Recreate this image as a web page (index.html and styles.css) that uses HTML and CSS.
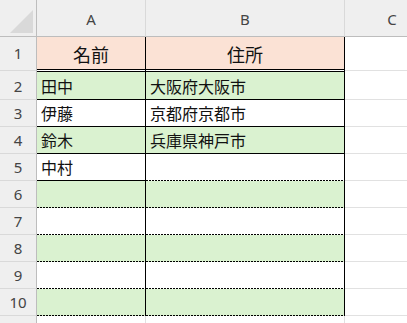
FILE: index.html
```html
<!DOCTYPE html>
<html lang="ja">
<head>
<meta charset="utf-8">
<link rel="stylesheet" href="styles.css">
</head>
<body>
<div class="sheet">
  <div class="corner"><svg width="36" height="36" viewBox="0 0 36 36"><polygon points="10,33 33,10 33,33" fill="#d9d9d9"/></svg></div>
  <div class="colh">A</div>
  <div class="colh">B</div>
  <div class="colh">C</div>

  <div class="rowh r1">1</div>
  <div class="cell hd ca">名前</div>
  <div class="cell hd cb">住所</div>
  <div class="cc r1c"></div>

  <div class="rowh">2</div>
  <div class="cell g ca solid">田中</div>
  <div class="cell g cb solid">大阪府大阪市</div>
  <div class="cc"></div>

  <div class="rowh">3</div>
  <div class="cell ca solid">伊藤</div>
  <div class="cell cb solid">京都府京都市</div>
  <div class="cc"></div>

  <div class="rowh">4</div>
  <div class="cell g ca solid">鈴木</div>
  <div class="cell g cb solid">兵庫県神戸市</div>
  <div class="cc"></div>

  <div class="rowh">5</div>
  <div class="cell ca solid">中村</div>
  <div class="cell cb dot"></div>
  <div class="cc"></div>

  <div class="rowh">6</div>
  <div class="cell g ca dot"></div>
  <div class="cell g cb dot"></div>
  <div class="cc"></div>

  <div class="rowh">7</div>
  <div class="cell ca dot"></div>
  <div class="cell cb dot"></div>
  <div class="cc"></div>

  <div class="rowh">8</div>
  <div class="cell g ca dot"></div>
  <div class="cell g cb dot"></div>
  <div class="cc"></div>

  <div class="rowh">9</div>
  <div class="cell ca dot"></div>
  <div class="cell cb dot"></div>
  <div class="cc"></div>

  <div class="rowh">10</div>
  <div class="cell g ca dot"></div>
  <div class="cell g cb dot"></div>
  <div class="cc"></div>

  <div class="rowh">11</div>
  <div class="empty"></div>
  <div class="empty"></div>
  <div class="cc"></div>
</div>
</body>
</html>
```

FILE: styles.css
```css
html, body {
  margin: 0;
  padding: 0;
  background: #fff;
  overflow: hidden;
}

body {
  width: 407px;
  height: 323px;
}

.sheet {
  display: grid;
  grid-template-columns: 37px 109px 199px 95px;
  grid-template-rows: 37px 35px 28px repeat(8, 27px) 27px;
  width: 440px;
  font-family: "Noto Sans CJK JP", "Noto Sans", sans-serif;
  color: #111;
}

.sheet > div {
  box-sizing: border-box;
}

.corner {
  background: #efefef;
  border-right: 1px solid #bdbdbd;
  border-bottom: 1px solid #bdbdbd;
}

.corner svg {
  display: block;
}

.colh {
  background: #efefef;
  border-right: 1px solid #d9d9d9;
  border-bottom: 1px solid #bdbdbd;
  display: flex;
  align-items: center;
  justify-content: center;
  font-family: "Noto Sans", "Open Sans", sans-serif;
  font-size: 15px;
  color: #444;
  padding-top: 1px;
}

.rowh {
  background: #efefef;
  border-right: 1px solid #bdbdbd;
  border-bottom: 1px solid #d9d9d9;
  display: flex;
  align-items: center;
  justify-content: center;
  font-family: "Noto Sans", "Open Sans", sans-serif;
  font-size: 15px;
  color: #444;
}

.rowh.r1 {
  border-bottom: none;
  background: linear-gradient(to bottom, #efefef 33px, #d9d9d9 33px 34px, #efefef 34px);
  padding-bottom: 3px;
}

.cell {
  display: flex;
  align-items: center;
  padding-left: 4px;
  font-size: 16px;
  line-height: 1;
  border-right: 1px solid #000;
}

.hd {
  background: #fbe2d5;
  background-clip: padding-box;
  border-bottom: 3px double #000;
  justify-content: center;
  padding-left: 0;
  font-size: 18px;
  padding-top: 1px;
}

.g {
  background-color: #daf2d0;
}

.solid {
  border-bottom: 1px solid #000;
}

.dot {
  background-image: repeating-linear-gradient(to right, #000 0 2px, transparent 2px 3px);
  background-size: 100% 1px;
  background-position: left bottom;
  background-repeat: no-repeat;
}

.cc {
  border-bottom: 1px solid #e1e1e1;
}

.cc.r1c {
  border-bottom: none;
  background: linear-gradient(to bottom, #fff 33px, #e1e1e1 33px 34px, #fff 34px);
}

.empty {
  border-right: 1px solid #e1e1e1;
}
```
